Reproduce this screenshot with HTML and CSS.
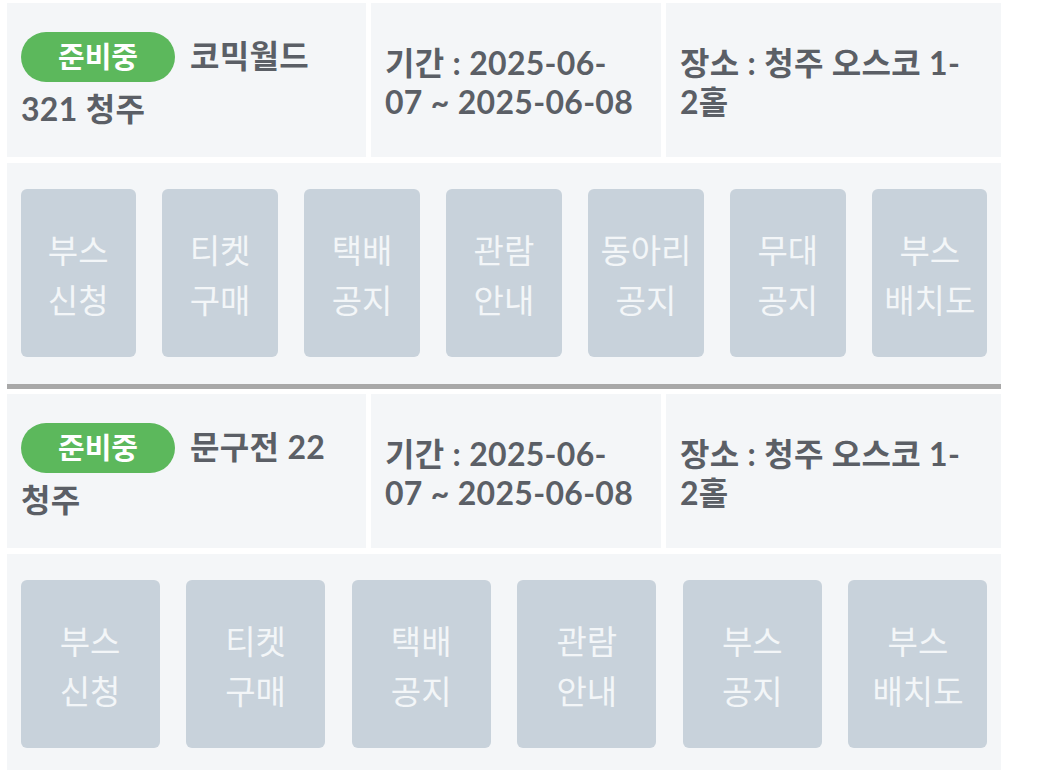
FILE: index.html
```html
<!DOCTYPE html>
<html lang="ko">
<head>
    <meta charset="UTF-8">
    <meta name="viewport" content="width=device-width, initial-scale=1.0">
    <title>행사 목록</title>
    <link rel="stylesheet" href="styles.css">
</head>
<body>
    <div class="event-list">

        <section class="event">
            <div class="event-info">
                <div class="info-cell title-cell"><span class="status">준비중</span> 코믹월드 321 청주</div>
                <div class="info-cell">기간 : 2025-06-<br>07 ~ 2025-06-08</div>
                <div class="info-cell">장소 : 청주 오스코 1-<br>2홀</div>
            </div>
            <div class="event-menu">
                <a class="menu-btn" href="#">부스<br>신청</a>
                <a class="menu-btn" href="#">티켓<br>구매</a>
                <a class="menu-btn" href="#">택배<br>공지</a>
                <a class="menu-btn" href="#">관람<br>안내</a>
                <a class="menu-btn" href="#">동아리<br>공지</a>
                <a class="menu-btn" href="#">무대<br>공지</a>
                <a class="menu-btn" href="#">부스<br>배치도</a>
            </div>
        </section>

        <section class="event">
            <div class="event-info">
                <div class="info-cell title-cell"><span class="status">준비중</span> 문구전 22 청주</div>
                <div class="info-cell">기간 : 2025-06-<br>07 ~ 2025-06-08</div>
                <div class="info-cell">장소 : 청주 오스코 1-<br>2홀</div>
            </div>
            <div class="event-menu">
                <a class="menu-btn" href="#">부스<br>신청</a>
                <a class="menu-btn" href="#">티켓<br>구매</a>
                <a class="menu-btn" href="#">택배<br>공지</a>
                <a class="menu-btn" href="#">관람<br>안내</a>
                <a class="menu-btn" href="#">부스<br>공지</a>
                <a class="menu-btn" href="#">부스<br>배치도</a>
            </div>
        </section>

    </div>
</body>
</html>
```

FILE: styles.css
```css
* {
    margin: 0;
    padding: 0;
    box-sizing: border-box;
}

body {
    font-family: 'Lato', 'Noto Sans CJK KR', sans-serif;
    background: #ffffff;
    color: #5b5f66;
}

.event-list {
    width: 1001px;
    padding: 3px 0 0 7px;
}

.event {
    border-bottom: 5px solid #a8a8a8;
}

.event + .event {
    margin-top: 5px;
    border-bottom: none;
}

/* 상단 정보 줄 */
.event-info {
    display: grid;
    grid-template-columns: 359px 290px 1fr;
    column-gap: 5px;
    margin-bottom: 6px;
}

.info-cell {
    background: #f4f6f8;
    height: 154px;
    padding: 40px 14px 0;
    font-size: 32px;
    font-weight: bold;
    line-height: 39px;
    letter-spacing: 0.3px;
}

.title-cell {
    padding-top: 29px;
}

.status {
    display: inline-block;
    height: 50px;
    padding: 0 37px;
    margin-right: 7px;
    margin-bottom: 7px;
    border-radius: 25px;
    background: #5cb85c;
    color: #ffffff;
    font-size: 29px;
    line-height: 50px;
    letter-spacing: 0;
    vertical-align: baseline;
}

/* 메뉴 버튼 */
.event-menu {
    display: flex;
    gap: 26.6px;
    background: #f4f6f8;
    padding: 26px 13.5px 27px;
}

.menu-btn {
    flex: 1;
    height: 168px;
    display: flex;
    align-items: center;
    justify-content: center;
    text-align: center;
    background: #c8d2db;
    border-radius: 6px;
    color: #f3f6f8;
    font-size: 33px;
    line-height: 50px;
    padding-top: 3px;
    text-decoration: none;
}
```
